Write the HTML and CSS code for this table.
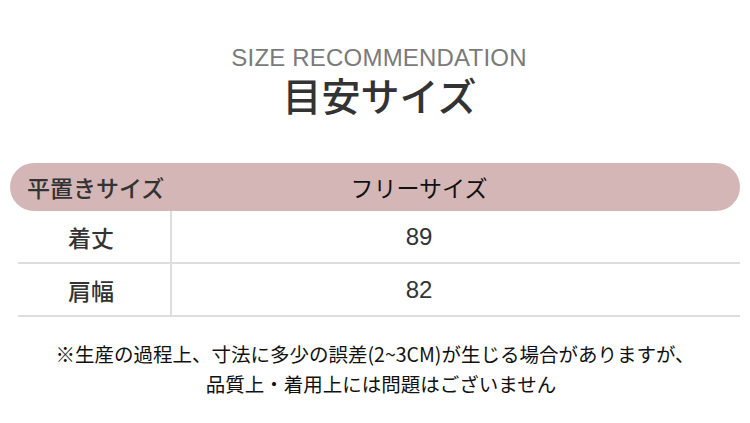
FILE: index.html
```html
<!DOCTYPE html>
<html lang="ja">
<head>
<meta charset="utf-8">
<link rel="stylesheet" href="styles.css">
</head>
<body>
<div class="page">
  <div class="title-en">SIZE RECOMMENDATION</div>
  <div class="title-ja">目安サイズ</div>
  <div class="table">
    <div class="head">
      <div class="head-label">平置きサイズ</div>
      <div class="head-value">フリーサイズ</div>
    </div>
    <div class="row">
      <div class="cell-label">着丈</div>
      <div class="cell-value">89</div>
    </div>
    <div class="row">
      <div class="cell-label">肩幅</div>
      <div class="cell-value">82</div>
    </div>
  </div>
  <div class="note">
    <p class="note-line">※生産の過程上、寸法に多少の誤差(2~3CM)が生じる場合がありますが、</p>
    <p class="note-line">品質上・着用上には問題はございません</p>
  </div>
</div>
</body>
</html>
```

FILE: styles.css
```css
html, body {
  margin: 0;
  padding: 0;
  background: #ffffff;
}
body {
  width: 750px;
  height: 423px;
  overflow: hidden;
  font-family: "Noto Sans CJK JP", "Noto Sans", sans-serif;
}
.page {
  padding-top: 46px;
}
.title-en {
  font-family: "Liberation Sans", Arial, sans-serif;
  font-size: 24px;
  line-height: 24px;
  letter-spacing: 0.2px;
  color: #7a7a7a;
  text-align: center;
  padding-left: 8px;
}
.title-ja {
  margin-top: 5px;
  font-size: 39px;
  line-height: 39px;
  color: #333333;
  font-weight: 500;
  text-align: center;
  padding-left: 9px;
}
.table {
  margin-top: 49px;
}
.head {
  margin: 0 10px;
  height: 48px;
  border-radius: 24px;
  background: #d4b6b7;
  display: flex;
  align-items: center;
  font-size: 23px;
}
.head-label {
  width: 162px;
  padding-left: 17px;
  box-sizing: border-box;
  color: #333333;
  font-weight: 500;
  white-space: nowrap;
}
.head-value {
  flex: 1;
  text-align: center;
  padding-right: 74px;
  color: #111111;
}
.row {
  margin: 0 10px 0 18px;
  display: flex;
  height: 53px;
  border-bottom: 2px solid #dddddd;
  box-sizing: border-box;
  color: #333333;
  font-size: 23px;
}
.row:first-of-type {
  height: 52px;
}
.cell-label {
  width: 154px;
  border-right: 2px solid #dddddd;
  display: flex;
  align-items: center;
  justify-content: center;
  box-sizing: border-box;
  padding-right: 6px;
  font-weight: 500;
}
.cell-value {
  flex: 1;
  display: flex;
  align-items: center;
  justify-content: center;
  padding-right: 74px;
  font-family: "Liberation Sans", Arial, sans-serif;
  font-size: 24px;
}
.note {
  margin-top: 22px;
  color: #111111;
  font-size: 19.5px;
  text-align: center;
}
.note-line {
  margin: 0;
  line-height: 30px;
}
.note-line + .note-line {
  padding-left: 12px;
}
```
